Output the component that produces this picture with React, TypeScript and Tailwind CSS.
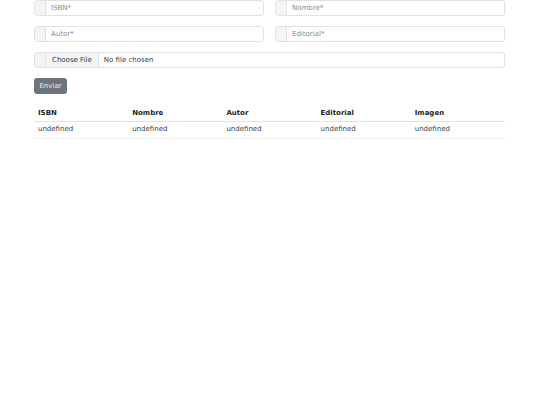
import React from 'react';

const font = { fontFamily: '"DejaVu Sans", sans-serif' };

const Field = ({ placeholder }: { placeholder: string }) => (
  <div className="flex h-4 flex-1 rounded-[3px] border border-[#dee2e6] bg-white overflow-hidden">
    <span className="w-[11px] shrink-0 border-r border-[#dee2e6] bg-[#f3f4f6]" />
    <input
      className="min-w-0 flex-1 bg-transparent px-[5px] text-[7px] text-[#212529] outline-none placeholder:text-[#858b91]"
      placeholder={placeholder}
    />
  </div>
);

const columns = ['ISBN', 'Nombre', 'Autor', 'Editorial', 'Imagen'];

export default function App() {
  return (
    <div className="min-h-[405px] w-[540px] bg-white" style={font}>
      <div className="ml-[34px] flex w-[471px] flex-col">
        <div className="flex gap-[11px]">
          <Field placeholder="ISBN*" />
          <Field placeholder="Nombre*" />
        </div>
        <div className="mt-[10px] flex gap-[11px]">
          <Field placeholder="Autor*" />
          <Field placeholder="Editorial*" />
        </div>
        <div className="mt-[10px] flex h-4 rounded-[3px] border border-[#dee2e6] overflow-hidden">
          <span className="w-[11px] shrink-0 border-r border-[#dee2e6] bg-[#f3f4f6]" />
          <span className="flex items-center border-r border-[#dee2e6] bg-[#f3f4f6] px-[6px] text-[7px] font-normal text-[#343a40]">
            Choose File
          </span>
          <span className="flex items-center px-[5px] text-[7px] text-[#343a40]">No file chosen</span>
        </div>
        <div className="mt-[10px] flex">
          <button className="h-4 w-[33px] rounded-[3px] bg-[#6c757d] text-[7px] leading-none text-[#e9ecef]">Enviar</button>
        </div>
        <table className="mt-[10px] w-full table-fixed border-collapse text-[7px] text-[#212529]">
          <thead>
            <tr className="border-b border-[#dee2e6]">
              {columns.map((c) => (
                <th key={c} className="h-[17px] px-[4px] pt-[2px] text-left font-bold">
                  {c}
                </th>
              ))}
            </tr>
          </thead>
          <tbody>
            <tr className="border-b border-[#eceef0]">
              {columns.map((c) => (
                <td key={c} className="h-[17px] px-[4px] text-left text-[#3d4247]">
                  undefined
                </td>
              ))}
            </tr>
          </tbody>
        </table>
      </div>
    </div>
  );
}
